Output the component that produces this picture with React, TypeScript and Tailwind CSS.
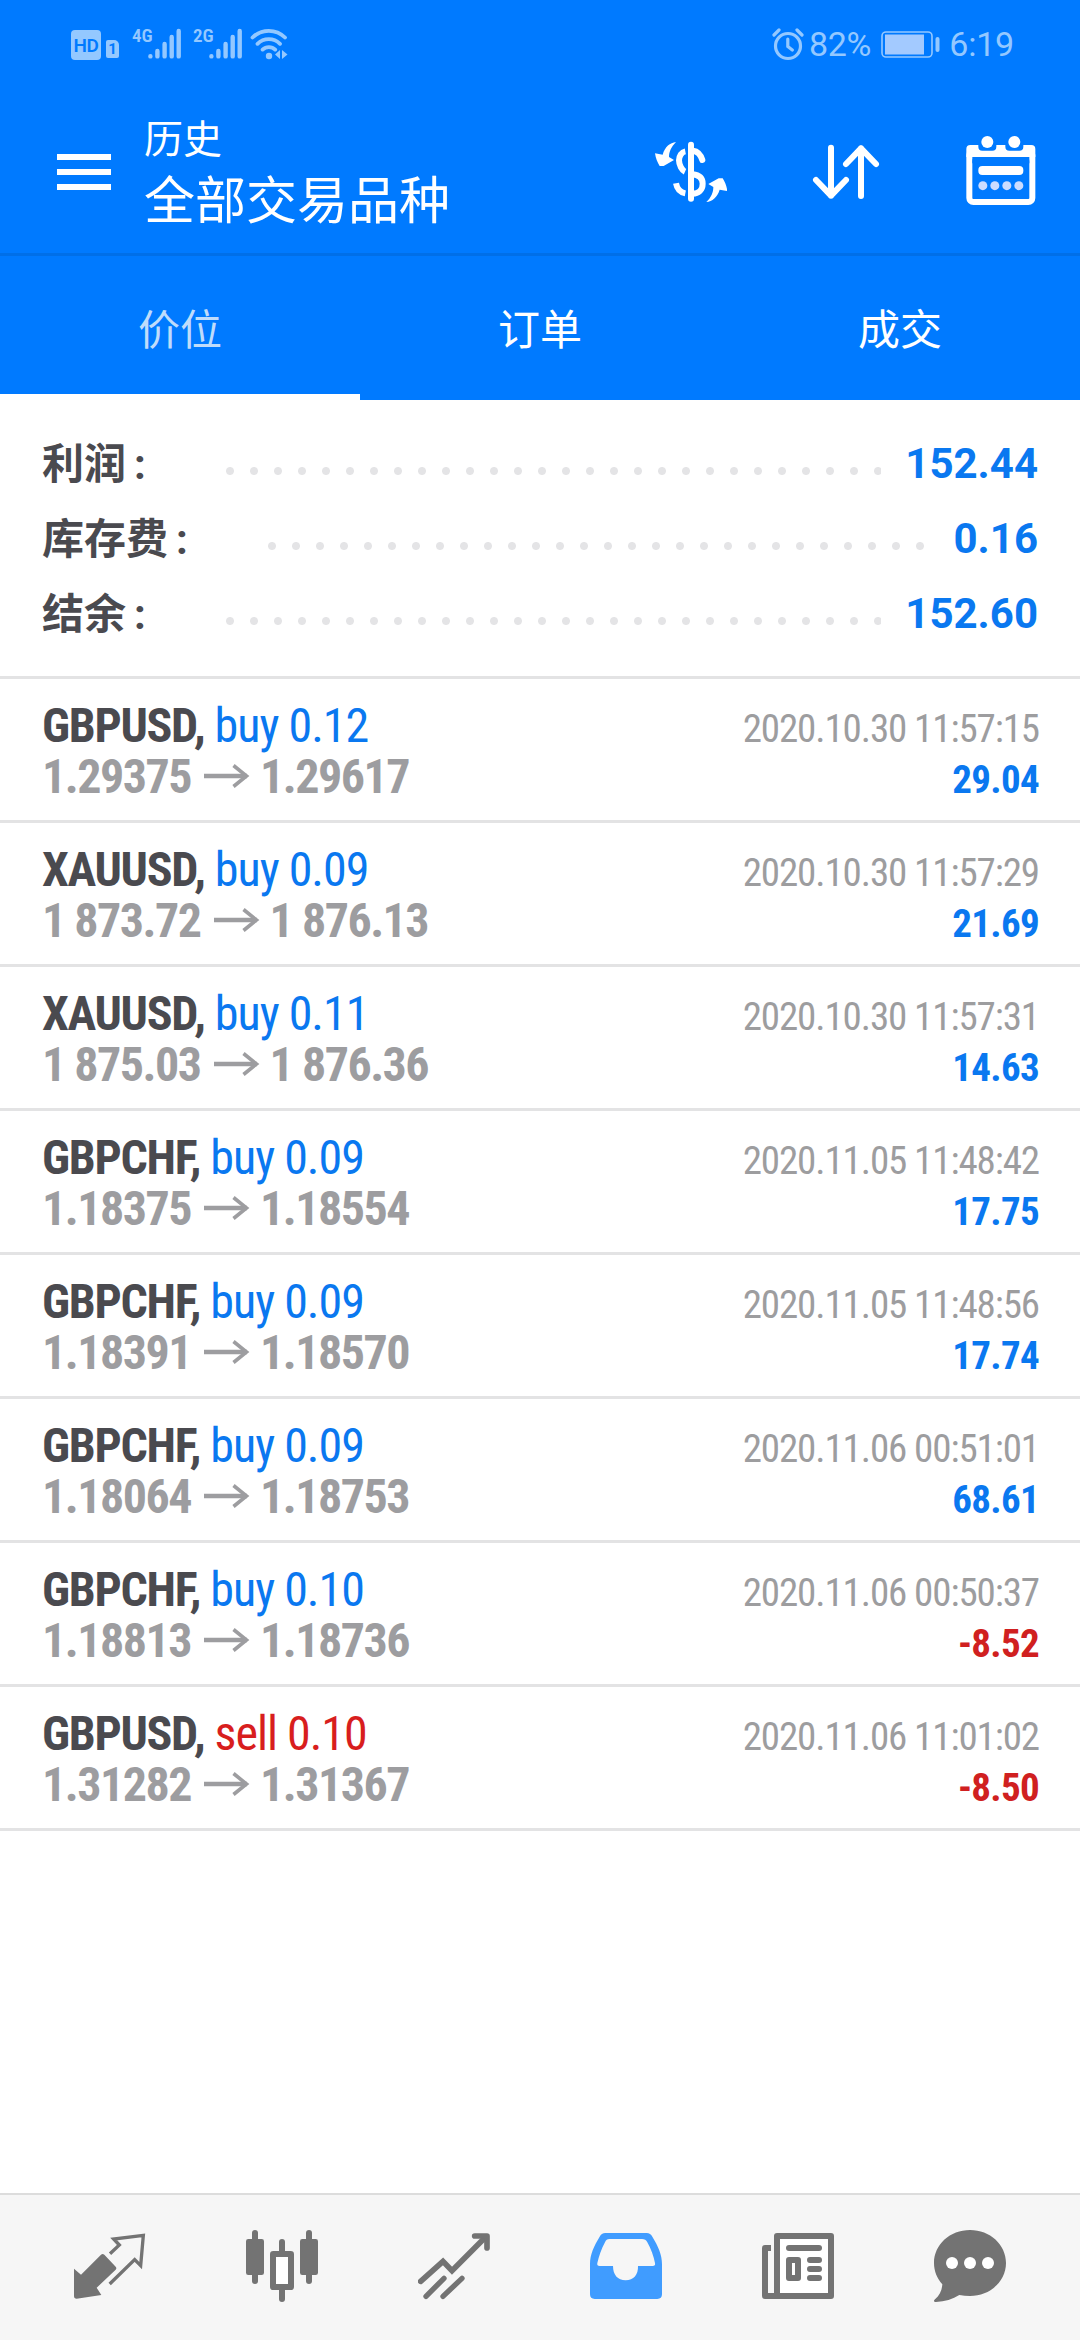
import React from 'react';

type Side = 'buy' | 'sell';

interface Deal {
  symbol: string;
  side: Side;
  volume: string;
  open: string;
  close: string;
  time: string;
  profit: string;
}

const deals: Deal[] = [
  { symbol: 'GBPUSD', side: 'buy', volume: '0.12', open: '1.29375', close: '1.29617', time: '2020.10.30 11:57:15', profit: '29.04' },
  { symbol: 'XAUUSD', side: 'buy', volume: '0.09', open: '1 873.72', close: '1 876.13', time: '2020.10.30 11:57:29', profit: '21.69' },
  { symbol: 'XAUUSD', side: 'buy', volume: '0.11', open: '1 875.03', close: '1 876.36', time: '2020.10.30 11:57:31', profit: '14.63' },
  { symbol: 'GBPCHF', side: 'buy', volume: '0.09', open: '1.18375', close: '1.18554', time: '2020.11.05 11:48:42', profit: '17.75' },
  { symbol: 'GBPCHF', side: 'buy', volume: '0.09', open: '1.18391', close: '1.18570', time: '2020.11.05 11:48:56', profit: '17.74' },
  { symbol: 'GBPCHF', side: 'buy', volume: '0.09', open: '1.18064', close: '1.18753', time: '2020.11.06 00:51:01', profit: '68.61' },
  { symbol: 'GBPCHF', side: 'buy', volume: '0.10', open: '1.18813', close: '1.18736', time: '2020.11.06 00:50:37', profit: '-8.52' },
  { symbol: 'GBPUSD', side: 'sell', volume: '0.10', open: '1.31282', close: '1.31367', time: '2020.11.06 11:01:02', profit: '-8.50' },
];

const summary = [
  { label: '利润', value: '152.44' },
  { label: '库存费', value: '0.16' },
  { label: '结余', value: '152.60' },
];

const tabs = ['价位', '订单', '成交'];

const SignalBars: React.FC = () => (
  <svg className="h-8 w-[33px]" viewBox="0 0 33 32" stroke="currentColor" strokeWidth="4.4" strokeLinecap="round">
    <path d="M2.4 28.2v.2M9.4 23v5.4M16.6 16v12.4M23.7 9v19.4M30.7 3v25.4" />
  </svg>
);

const StatusBar: React.FC = () => (
  <div className="flex h-[88px] items-center justify-between pl-[71px] pr-[66px] text-[#94c8ff]">
    <div className="flex h-8 items-start">
      <span className="mt-0.5 flex h-[30px] w-[30px] items-center justify-center rounded-[4px] bg-[#94c8ff] text-[19px] font-semibold leading-none tracking-tight text-[#007aff]">
        HD
      </span>
      <span className="ml-[5px] mt-3 flex h-[18px] w-[13px] items-center justify-center rounded-[2px] rounded-tr-[5px] bg-[#94c8ff] text-[15px] font-bold leading-none text-[#007aff]">
        1
      </span>
      <span className="ml-[13px] mt-px w-[16px] whitespace-nowrap font-['Roboto_Condensed',Roboto,sans-serif] text-[19px] font-semibold leading-[14px] [font-stretch:75%]">
        4G
      </span>
      <SignalBars />
      <span className="ml-3 mt-px w-[16px] whitespace-nowrap font-['Roboto_Condensed',Roboto,sans-serif] text-[19px] font-semibold leading-[14px] [font-stretch:75%]">
        2G
      </span>
      <SignalBars />
      <svg className="ml-2 h-8 w-[38px]" viewBox="0 0 38 32" fill="none" stroke="currentColor" strokeWidth="3.8" strokeLinecap="round">
        <path d="M2.5 9.5a23 23 0 0 1 32.5 0M7.5 15.8a16 16 0 0 1 22.5 0M12.6 21.6a9 9 0 0 1 12.6 0" />
        <circle cx="19" cy="28" r="3.2" fill="currentColor" stroke="none" />
        <path d="M30 22v9l-5-4.5zM32 22v9l5.5-4.5z" fill="currentColor" stroke="none" />
      </svg>
    </div>
    <div className="flex items-center text-[34px] leading-none">
      <svg className="h-[34px] w-8" viewBox="0 0 32 34" fill="none" stroke="currentColor" strokeWidth="3.2" strokeLinecap="round">
        <circle cx="16" cy="19" r="12.5" />
        <path d="M15.8 12v7.5l4.5 3.5M2 8l5-5M30 8l-5-5" />
      </svg>
      <span className="ml-[5px] tracking-[-0.3px]">82%</span>
      <svg className="ml-2.5 mt-px h-[27px] w-[59px]" viewBox="0 0 59 27">
        <rect x="1" y="1" width="50" height="25" rx="4" fill="none" stroke="currentColor" strokeWidth="1.6" />
        <rect x="4" y="3.5" width="39" height="20" fill="#a3caff" />
        <path d="M56.5 8v11" stroke="currentColor" strokeWidth="4" strokeLinecap="round" />
      </svg>
      <span className="ml-[9px] tracking-[-0.2px]">6:19</span>
    </div>
  </div>
);

const DollarIcon: React.FC = () => (
  <svg className="size-[72px]" viewBox="72 78 216 216" fill="none" stroke="white" strokeWidth="18">
    <path d="M180 104v162" strokeLinecap="round" />
    <path d="M163 124c-11 2-19 14-19 27 0 14 9 30 18 34" />
    <path d="M186 122c16 2 23 12 28 28" strokeLinecap="round" />
    <path d="M185 193c18 2 30 9 30 28s-13 30-30 30" />
    <path d="M135 220c3 17 12 27 28 30" />
    <path d="M135 96c-18 2-33 14-40 38l-23-4c2 15 7 27 14 38h12l31-18-15-9c0-15 6-30 21-45z" fill="white" stroke="none" />
    <path d="M226 276c18-2 33-14 40-37l23 4c-2-15-7-27-14-38h-12l-31 17 15 9c0 16-6 31-21 45z" fill="white" stroke="none" />
  </svg>
);

const SortIcon: React.FC = () => (
  <svg className="size-[72px]" viewBox="540 78 216 216" fill="none" stroke="white" strokeWidth="18" strokeLinecap="round" strokeLinejoin="round">
    <path d="M603 113v144M558 210l45 47 45-47" />
    <path d="M693 258V115M648 162l45-47 45 47" />
  </svg>
);

const CalendarIcon: React.FC = () => (
  <svg className="size-[72px]" viewBox="1004 78 216 216">
    <rect x="1017" y="123" width="189" height="153" rx="12" fill="none" stroke="white" strokeWidth="18" />
    <path d="M1008 141v-24q0-12 12-12h183q12 0 12 12v24z" fill="white" />
    <path d="M1026 160v-7q0-12 12-12h147q12 0 12 12v7z" fill="#007aff" />
    <path d="M1044 98v12q0 12 12 12h30q12 0 12-12V98zM1125 98v12q0 12 12 12h30q12 0 12-12V98z" fill="#007aff" />
    <circle cx="1071" cy="96" r="18" fill="white" />
    <circle cx="1152" cy="96" r="18" fill="white" />
    <rect x="1044" y="168" width="135" height="27" rx="12" fill="white" />
    <g fill="#ccdcff">
      <circle cx="1057.5" cy="227" r="13.5" />
      <circle cx="1093.5" cy="227" r="13.5" />
      <circle cx="1129.5" cy="227" r="13.5" />
      <circle cx="1165.5" cy="227" r="13.5" />
    </g>
  </svg>
);

const Header: React.FC = () => (
  <div className="flex h-[165px] items-start pl-[57px] pr-[43px] text-white">
    <div className="mt-[66px] flex w-[54px] flex-col gap-[9px]">
      <span className="h-1.5 bg-white" />
      <span className="h-1.5 bg-white" />
      <span className="h-1.5 bg-white" />
    </div>
    <div className="ml-[33px] mt-[27px] font-normal">
      <div className="text-[39px] leading-[50px]">历史</div>
      <div className="mt-[3px] text-[51px] leading-[68px]">全部交易品种</div>
    </div>
    <div className="ml-auto mt-12 flex gap-[83px]">
      <DollarIcon />
      <SortIcon />
      <CalendarIcon />
    </div>
  </div>
);

const PriceArrow: React.FC = () => (
  <svg className="ml-[13px] mr-2.5 inline-block h-6 w-[46px] align-[5px]" viewBox="0 0 46 24" fill="none" stroke="currentColor" strokeWidth="4.5">
    <path d="M0 12h43" />
    <path d="M29.5 1.5 42.5 12l-13 10.5" strokeWidth="3.6" />
  </svg>
);

const DealRow: React.FC<{ deal: Deal }> = ({ deal }) => {
  const loss = deal.profit.startsWith('-');
  return (
    <div className="flex h-36 justify-between border-b-[3px] border-[#e3e3e4] px-[42px] pt-[21px] font-['Roboto_Condensed',Roboto,sans-serif] [font-stretch:75%]">
      <div className="whitespace-nowrap text-[48px] leading-[51px]">
        <div className="tracking-[-1px]">
          <span className="font-bold tracking-[-1.3px] text-[#4a4a4f]">{deal.symbol},</span>{' '}
          <span className={deal.side === 'sell' ? 'text-[#d81e1e]' : 'text-[#0a78f0]'}>
            {deal.side} {deal.volume}
          </span>
        </div>
        <div className="font-bold tracking-[-1.5px] text-[#9d9da0]">
          {deal.open}
          <PriceArrow />
          {deal.close}
        </div>
      </div>
      <div className="pt-1 text-right text-[39px] leading-[51px]">
        <div className="-mr-px tracking-[-1.1px] text-[#9d9d9f]">{deal.time}</div>
        <div className={loss ? '-mr-px font-bold tracking-[-0.7px] text-[#d02020]' : '-mr-px font-bold tracking-[-0.7px] text-[#0a78f0]'}>
          {deal.profit}
        </div>
      </div>
    </div>
  );
};

const QuotesIcon: React.FC = () => (
  <svg className="size-[72px]" viewBox="102 150 216 216" fill="none" stroke="#737373" strokeWidth="10">
    <path d="M102 266l21 18 60-60q5-4 10 0l34 36q4 5 0 9l-57 54 14 22-74 11q-8 0-8-8z" fill="#737373" stroke="none" />
    <path d="M210 221l28-26-17-18 89-11-8 91-18-18-75 73" />
  </svg>
);

const ChartsIcon: React.FC = () => (
  <svg className="size-[72px]" viewBox="618 150 216 216" fill="#737373">
    <rect x="636" y="150" width="18" height="162" rx="9" />
    <rect x="618" y="177" width="54" height="108" rx="7" />
    <rect x="798" y="150" width="18" height="162" rx="9" />
    <rect x="780" y="177" width="54" height="108" rx="7" />
    <rect x="717" y="177" width="18" height="50" rx="9" />
    <rect x="717" y="318" width="18" height="48" rx="9" />
    <rect x="699" y="222" width="54" height="99" rx="1" fill="#fff" stroke="#737373" strokeWidth="18" strokeLinejoin="round" />
  </svg>
);

const TradeIcon: React.FC = () => (
  <svg className="size-[72px]" viewBox="1134 150 216 216" fill="none" stroke="#737373" strokeWidth="17" strokeLinecap="round" strokeLinejoin="round">
    <path d="M1142 304l67-60 27 28 100-100" strokeLinejoin="miter" />
    <path d="M1304 168h37v36" />
    <path d="M1158 349l54-54M1209 349l57-54" strokeWidth="16" />
  </svg>
);

const HistoryIcon: React.FC = () => (
  <svg className="size-[72px]" viewBox="90 150 216 216">
    <path
      d="M136 159h124c8 0 13 4 17 11 17 28 29 53 29 82v91c0 9-5 14-14 14H104c-9 0-14-5-14-14v-91c0-29 12-54 29-82 4-7 9-11 17-11z"
      fill="#409cff"
    />
    <path
      d="M148 177h98q11 0 16 10c11 19 19 42 23 62q2 9-7 9h-44c1 26-13 43-37 43s-38-17-38-43h-40q-9 0-7-9c5-20 12-43 23-62q4-10 13-10z"
      fill="#f6f6f6"
    />
  </svg>
);

const NewsIcon: React.FC = () => (
  <svg className="size-[72px]" viewBox="606 150 216 216" fill="none" stroke="#737373" strokeWidth="18" strokeLinejoin="round">
    <rect x="651" y="168" width="162" height="180" fill="#fff" />
    <path d="M633 204h-18v144h36" />
    <path d="M687 204h90" strokeLinecap="round" />
    <rect x="687" y="240" width="27" height="54" />
    <path d="M750 240h27M750 267h27M750 294h27" strokeLinecap="round" />
  </svg>
);

const ChatIcon: React.FC = () => (
  <svg className="size-[72px]" viewBox="1122 150 216 216">
    <path
      d="M1230 150c60 0 108 44 108 99s-48 99-108 99c-11 0-22-1-32-3-20 13-43 20-70 21-7 0-8-4-3-8 14-12 21-27 22-45-16-18-25-40-25-64 0-55 48-99 108-99z"
      fill="#737373"
    />
    <circle cx="1176" cy="249" r="18" fill="#fff" />
    <circle cx="1230" cy="249" r="18" fill="#fff" />
    <circle cx="1284" cy="249" r="18" fill="#fff" />
  </svg>
);

const navIcons = [QuotesIcon, ChartsIcon, TradeIcon, HistoryIcon, NewsIcon, ChatIcon];

export default function App() {
  return (
    <div className="flex h-[2340px] w-[1080px] flex-col overflow-hidden bg-white font-[Roboto,'Noto_Sans_CJK_SC',sans-serif]">
      <header className="bg-[#007aff]">
        <StatusBar />
        <Header />
        <div className="grid h-[147px] grid-cols-3 border-t-[3px] border-[#006fe8] text-center text-[42px] font-normal leading-[149px] text-white">
          {tabs.map((tab, i) => (
            <div key={tab} className={i === 0 ? 'h-36 border-b-[6px] border-white text-[#bfdcfb]' : 'h-36'}>
              {tab}
            </div>
          ))}
        </div>
      </header>

      <section className="flex h-[279px] flex-col border-b-[3px] border-[#e3e3e4] px-[42px] pt-[26px]">
        {summary.map((item) => (
          <div key={item.label} className="flex h-[75px] items-center text-[42px] font-bold">
            <span className="whitespace-nowrap pt-0.5 text-[#4a4a4f]">{item.label}</span>
            <span className="ml-2 w-9 pt-0.5 text-[#4a4a4f]">:</span>
            <span className="ml-[48px] mt-[15px] h-2 flex-1 bg-[radial-gradient(circle,#e4e4e6_3.5px,transparent_4.5px)] bg-[length:24px_8px] bg-repeat-x" />
            <span className="ml-6 text-[#0a78f0]">{item.value}</span>
          </div>
        ))}
      </section>

      <main className="flex-1">
        {deals.map((deal) => (
          <DealRow key={deal.time} deal={deal} />
        ))}
      </main>

      <nav className="grid h-[147px] grid-cols-6 items-center justify-items-center border-t-2 border-[#dcdcdc] bg-[#f6f6f6] px-6 pb-1">
        {navIcons.map((Icon, i) => (
          <Icon key={i} />
        ))}
      </nav>
    </div>
  );
}
